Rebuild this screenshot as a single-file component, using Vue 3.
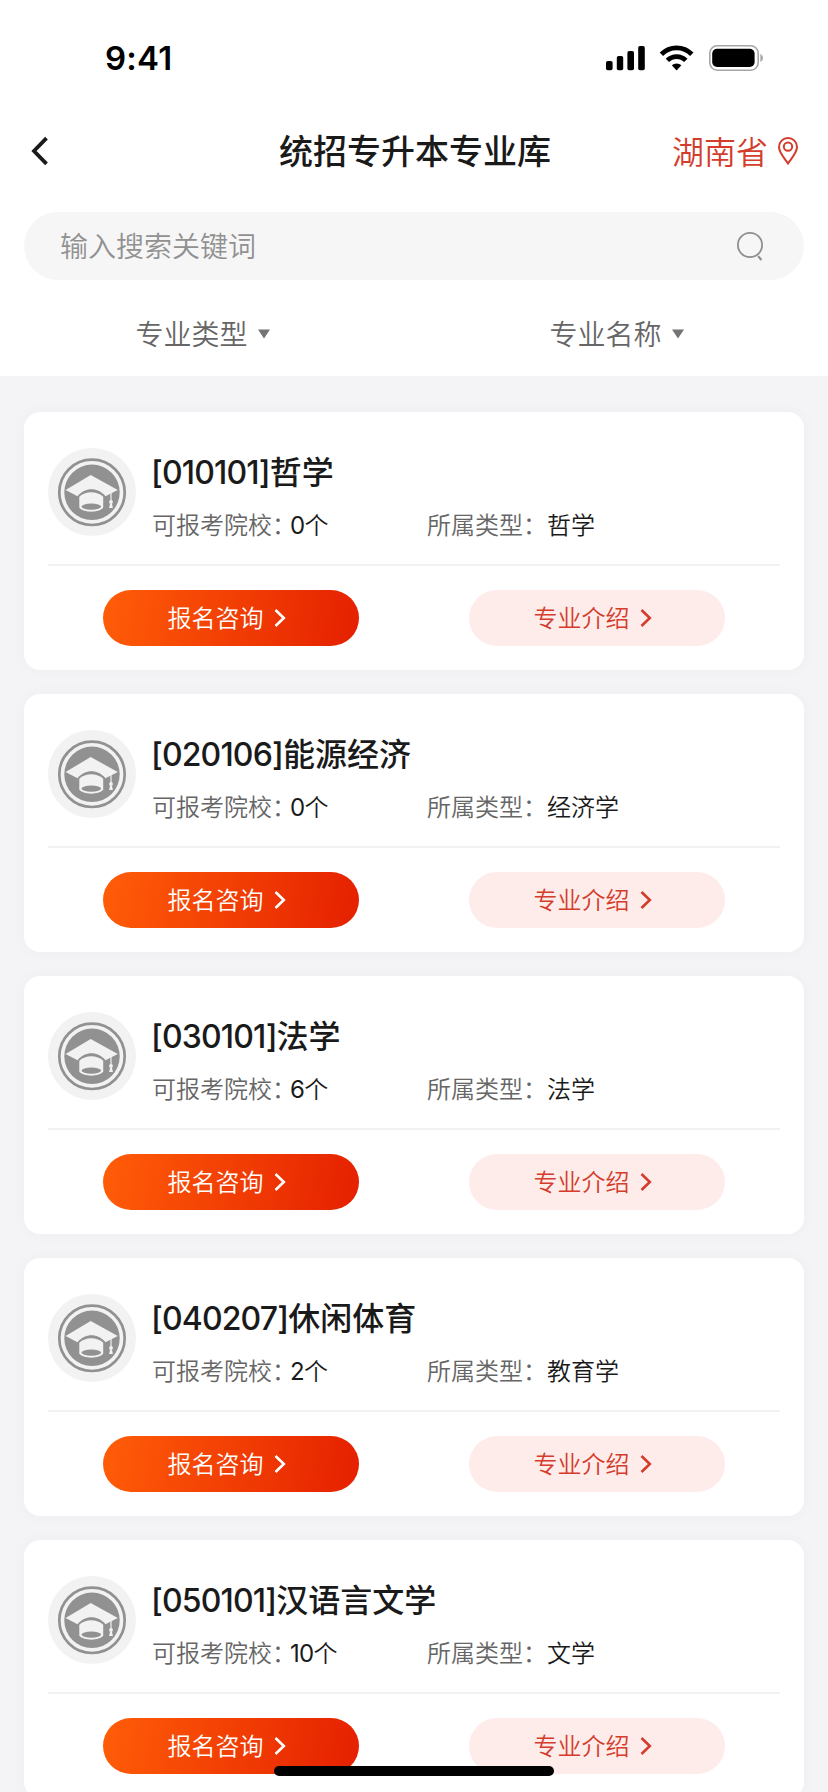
<script setup>
const filters = ['专业类型', '专业名称']
const majors = [
  { code: '[010101]', name: '哲学', count: '0', type: '哲学' },
  { code: '[020106]', name: '能源经济', count: '0', type: '经济学' },
  { code: '[030101]', name: '法学', count: '6', type: '法学' },
  { code: '[040207]', name: '休闲体育', count: '2', type: '教育学' },
  { code: '[050101]', name: '汉语言文学', count: '10', type: '文学' },
]
</script>

<template>
  <div class="page">
    <header class="top">
      <div class="status">
        <span class="time">9:41</span>
        <svg class="status-icons" width="160" height="30" viewBox="0 0 160 30">
          <rect x="2" y="18" width="6.6" height="9.2" rx="1.8" />
          <rect x="12.8" y="13" width="6.4" height="14.2" rx="1.8" />
          <rect x="23.4" y="8" width="6.6" height="19.2" rx="1.8" />
          <rect x="34.2" y="3" width="6.6" height="24.2" rx="1.8" />
          <g fill="none" stroke="#000" stroke-width="4.8">
            <path d="M57.4 11.2a21.3 21.3 0 0 1 30.4 0" />
            <path d="M63.4 17.4a13 13 0 0 1 18.4 0" />
          </g>
          <path d="M67.8 22.3a7 7 0 0 1 9.6 0L72.6 27.4z" />
          <rect x="105.8" y="2.8" width="48.4" height="24.4" rx="7.4" fill="none" stroke="#a6a6a6" stroke-width="1.6" />
          <rect x="108.2" y="5.8" width="42.4" height="18.2" rx="4.8" />
          <path d="M156.4 11v8c3.4-1.4 3.4-6.6 0-8z" fill="#a6a6a6" />
        </svg>
      </div>
      <nav class="nav">
        <svg class="back" width="20" height="30" viewBox="0 0 20 30">
          <path d="M15.5 2.2 3 15 15.500 27.800" fill="none" stroke="#1a1a1a" stroke-width="3.800" />
        </svg>
        <h1 class="title">统招专升本专业库</h1>
        <div class="place">
          <span>湖南省</span>
          <svg width="22" height="30" viewBox="0 0 22 30" fill="none" stroke="#d43c2c" stroke-width="2">
            <path d="M11 27.400C7 21.600 2 16.600 2 11a9 9 0 0 1 18 0c0 5.600-5 10.600-9 16.400z" />
            <circle cx="11" cy="10.600" r="4.200" />
          </svg>
        </div>
      </nav>
      <div class="search">
        <span>输入搜索关键词</span>
        <svg width="28" height="32" viewBox="0 0 28 32" fill="none" stroke="#8f8f8f" stroke-width="1.800">
          <circle cx="14" cy="15" r="12.100" />
          <path d="M22.200 26.100 25.400 30" stroke-width="2.200" />
        </svg>
      </div>
      <div class="filters">
        <div v-for="f in filters" :key="f" class="filter">
          <span>{{ f }}</span>
          <svg width="12" height="10" viewBox="0 0 12 10"><path d="M0 .5h12L6 9.500z" fill="#747474" /></svg>
        </div>
      </div>
    </header>

    <main class="list">
      <article v-for="m in majors" :key="m.code" class="card">
        <div class="summary">
          <svg class="avatar" width="88" height="88" viewBox="0 0 88 88">
            <circle cx="44" cy="44" r="44" fill="#f2f2f2" />
            <circle cx="44" cy="44.300" r="32.700" fill="none" stroke="#919191" stroke-width="2.700" />
            <circle cx="44" cy="44.300" r="27.700" fill="#919191" />
            <path d="M42.700 27 69.800 42 57.500 48.200C50 39 37 39 29.500 48.200L17.600 42z" fill="#f2f2f2" />
            <path d="M31.300 48.800C37 42.800 49.500 42.800 55.200 48.800V59.500C52 65 34.500 65 31.300 59.500z" fill="#f2f2f2" />
            <ellipse cx="43.300" cy="58.600" rx="9.800" ry="3.100" fill="#919191" />
            <path d="M63 43v10.500" stroke="#f2f2f2" stroke-width="1.200" />
            <circle cx="63" cy="54" r="1.900" fill="#f2f2f2" />
            <path d="M62.100 55.500h1.800l1 4.500h-3.800z" fill="#f2f2f2" />
          </svg>
          <div class="detail">
            <h2 class="name"><span class="code">{{ m.code }}</span>{{ m.name }}</h2>
            <div class="facts">
              <div class="fact schools">
                <span class="label">可报考院校<span class="colon">：</span></span>
                <span class="value"><span class="num">{{ m.count }}</span>个</span>
              </div>
              <div class="fact kind">
                <span class="label">所属类型：</span>
                <span class="value">{{ m.type }}</span>
              </div>
            </div>
          </div>
        </div>
        <div class="actions">
          <button class="btn primary">
            <span>报名咨询</span>
            <svg width="12" height="20" viewBox="0 0 12 20"><path d="M1.500 2 9.800 10 1.500 18" /></svg>
          </button>
          <button class="btn soft">
            <span>专业介绍</span>
            <svg width="12" height="20" viewBox="0 0 12 20"><path d="M1.500 2 9.800 10 1.500 18" /></svg>
          </button>
        </div>
      </article>
    </main>
    <div class="home-bar"></div>
  </div>
</template>

<style>
body {
  overflow: hidden;
}
</style>

<style scoped>
.page {
  position: relative;
  box-sizing: border-box;
  width: 828px;
  height: 1792px;
  overflow: hidden;
  background: #f4f4f6;
  color: #1a1a1a;
  font-family: "Noto Sans CJK SC", sans-serif;
}
.top {
  height: 376px;
  background: #fff;
}
.status {
  display: flex;
  justify-content: space-between;
  height: 107px;
  padding: 43px 64px 0 105px;
  box-sizing: border-box;
}
.time {
  font: 600 33px/30px Inter, sans-serif;
  letter-spacing: 0.2px;
  color: #000;
}
.nav {
  display: grid;
  grid-template-columns: 1fr auto 1fr;
  align-items: center;
  height: 88px;
  padding: 0 29px 0 31px;
}
.title {
  margin: 0;
  padding-bottom: 2px;
  font-size: 34px;
  font-weight: 500;
  line-height: 48px;
}
.place {
  display: flex;
  align-items: center;
  justify-content: flex-end;
  gap: 9px;
  font-size: 32px;
  line-height: 48px;
  font-weight: 350;
  color: #d43c2c;
}
.place span,
.search span,
.filter span,
.btn span {
  padding-bottom: 2px;
}
.search {
  display: flex;
  align-items: center;
  justify-content: space-between;
  height: 68px;
  margin: 17px 24px 0;
  padding: 0 40px 0 36px;
  box-sizing: border-box;
  border-radius: 34px;
  background: #f6f6f6;
  color: #919191;
  font-size: 28px;
  font-weight: 350;
}
.filters {
  display: grid;
  grid-template-columns: 1fr 1fr;
  padding-top: 6px;
}
.filter {
  display: flex;
  align-items: center;
  justify-content: center;
  gap: 10px;
  height: 96px;
  padding-right: 9px;
  font-size: 28px;
  font-weight: 350;
  color: #666;
}
.list {
  display: flex;
  flex-direction: column;
  gap: 24px;
  padding: 36px 24px 0;
}
.card {
  height: 258px;
  flex: none;
  box-sizing: border-box;
  padding: 0 24px;
  border-radius: 16px;
  background: #fff;
  box-shadow: 0 0 16px rgba(0, 0, 0, 0.03);
}
.summary {
  display: flex;
  gap: 16px;
  height: 154px;
  padding-top: 36px;
  box-sizing: border-box;
  border-bottom: 2px solid #f2f2f2;
}
.detail {
  flex: 1;
}
.name {
  margin: -1px 0 0 -1px;
  font-size: 32px;
  font-weight: 500;
  line-height: 46px;
  white-space: nowrap;
}
.code {
  font-family: Inter, sans-serif;
  letter-spacing: -0.85px;
}
.facts {
  display: flex;
  margin-top: 10px;
  font-size: 24px;
  font-weight: 350;
  line-height: 36px;
  white-space: nowrap;
}
.fact {
  display: flex;
}
.schools {
  width: 275px;
}
.label {
  color: #666;
}
.colon {
  letter-spacing: -6px;
}
.kind .label {
  width: 120px;
}
.num {
  font-family: Inter, sans-serif;
  font-weight: 400;
  letter-spacing: -0.7px;
}
.actions {
  display: grid;
  grid-template-columns: 1fr 1fr;
  justify-items: center;
  padding-top: 24px;
}
.btn {
  display: flex;
  align-items: center;
  justify-content: center;
  gap: 10px;
  width: 256px;
  height: 56px;
  padding: 0 9px 0 0;
  border: 0;
  border-radius: 28px;
  font: 350 24px/36px "Noto Sans CJK SC", sans-serif;
}
.btn path {
  fill: none;
  stroke: currentColor;
  stroke-width: 2.6;
}
.primary {
  background: linear-gradient(100deg, #ff5d08, #e52000);
  color: #fff;
}
.soft {
  background: #feeceb;
  color: #d43c2c;
}
.home-bar {
  position: absolute;
  left: 274px;
  bottom: 16px;
  width: 280px;
  height: 10px;
  border-radius: 5px;
  background: #000;
}
</style>
